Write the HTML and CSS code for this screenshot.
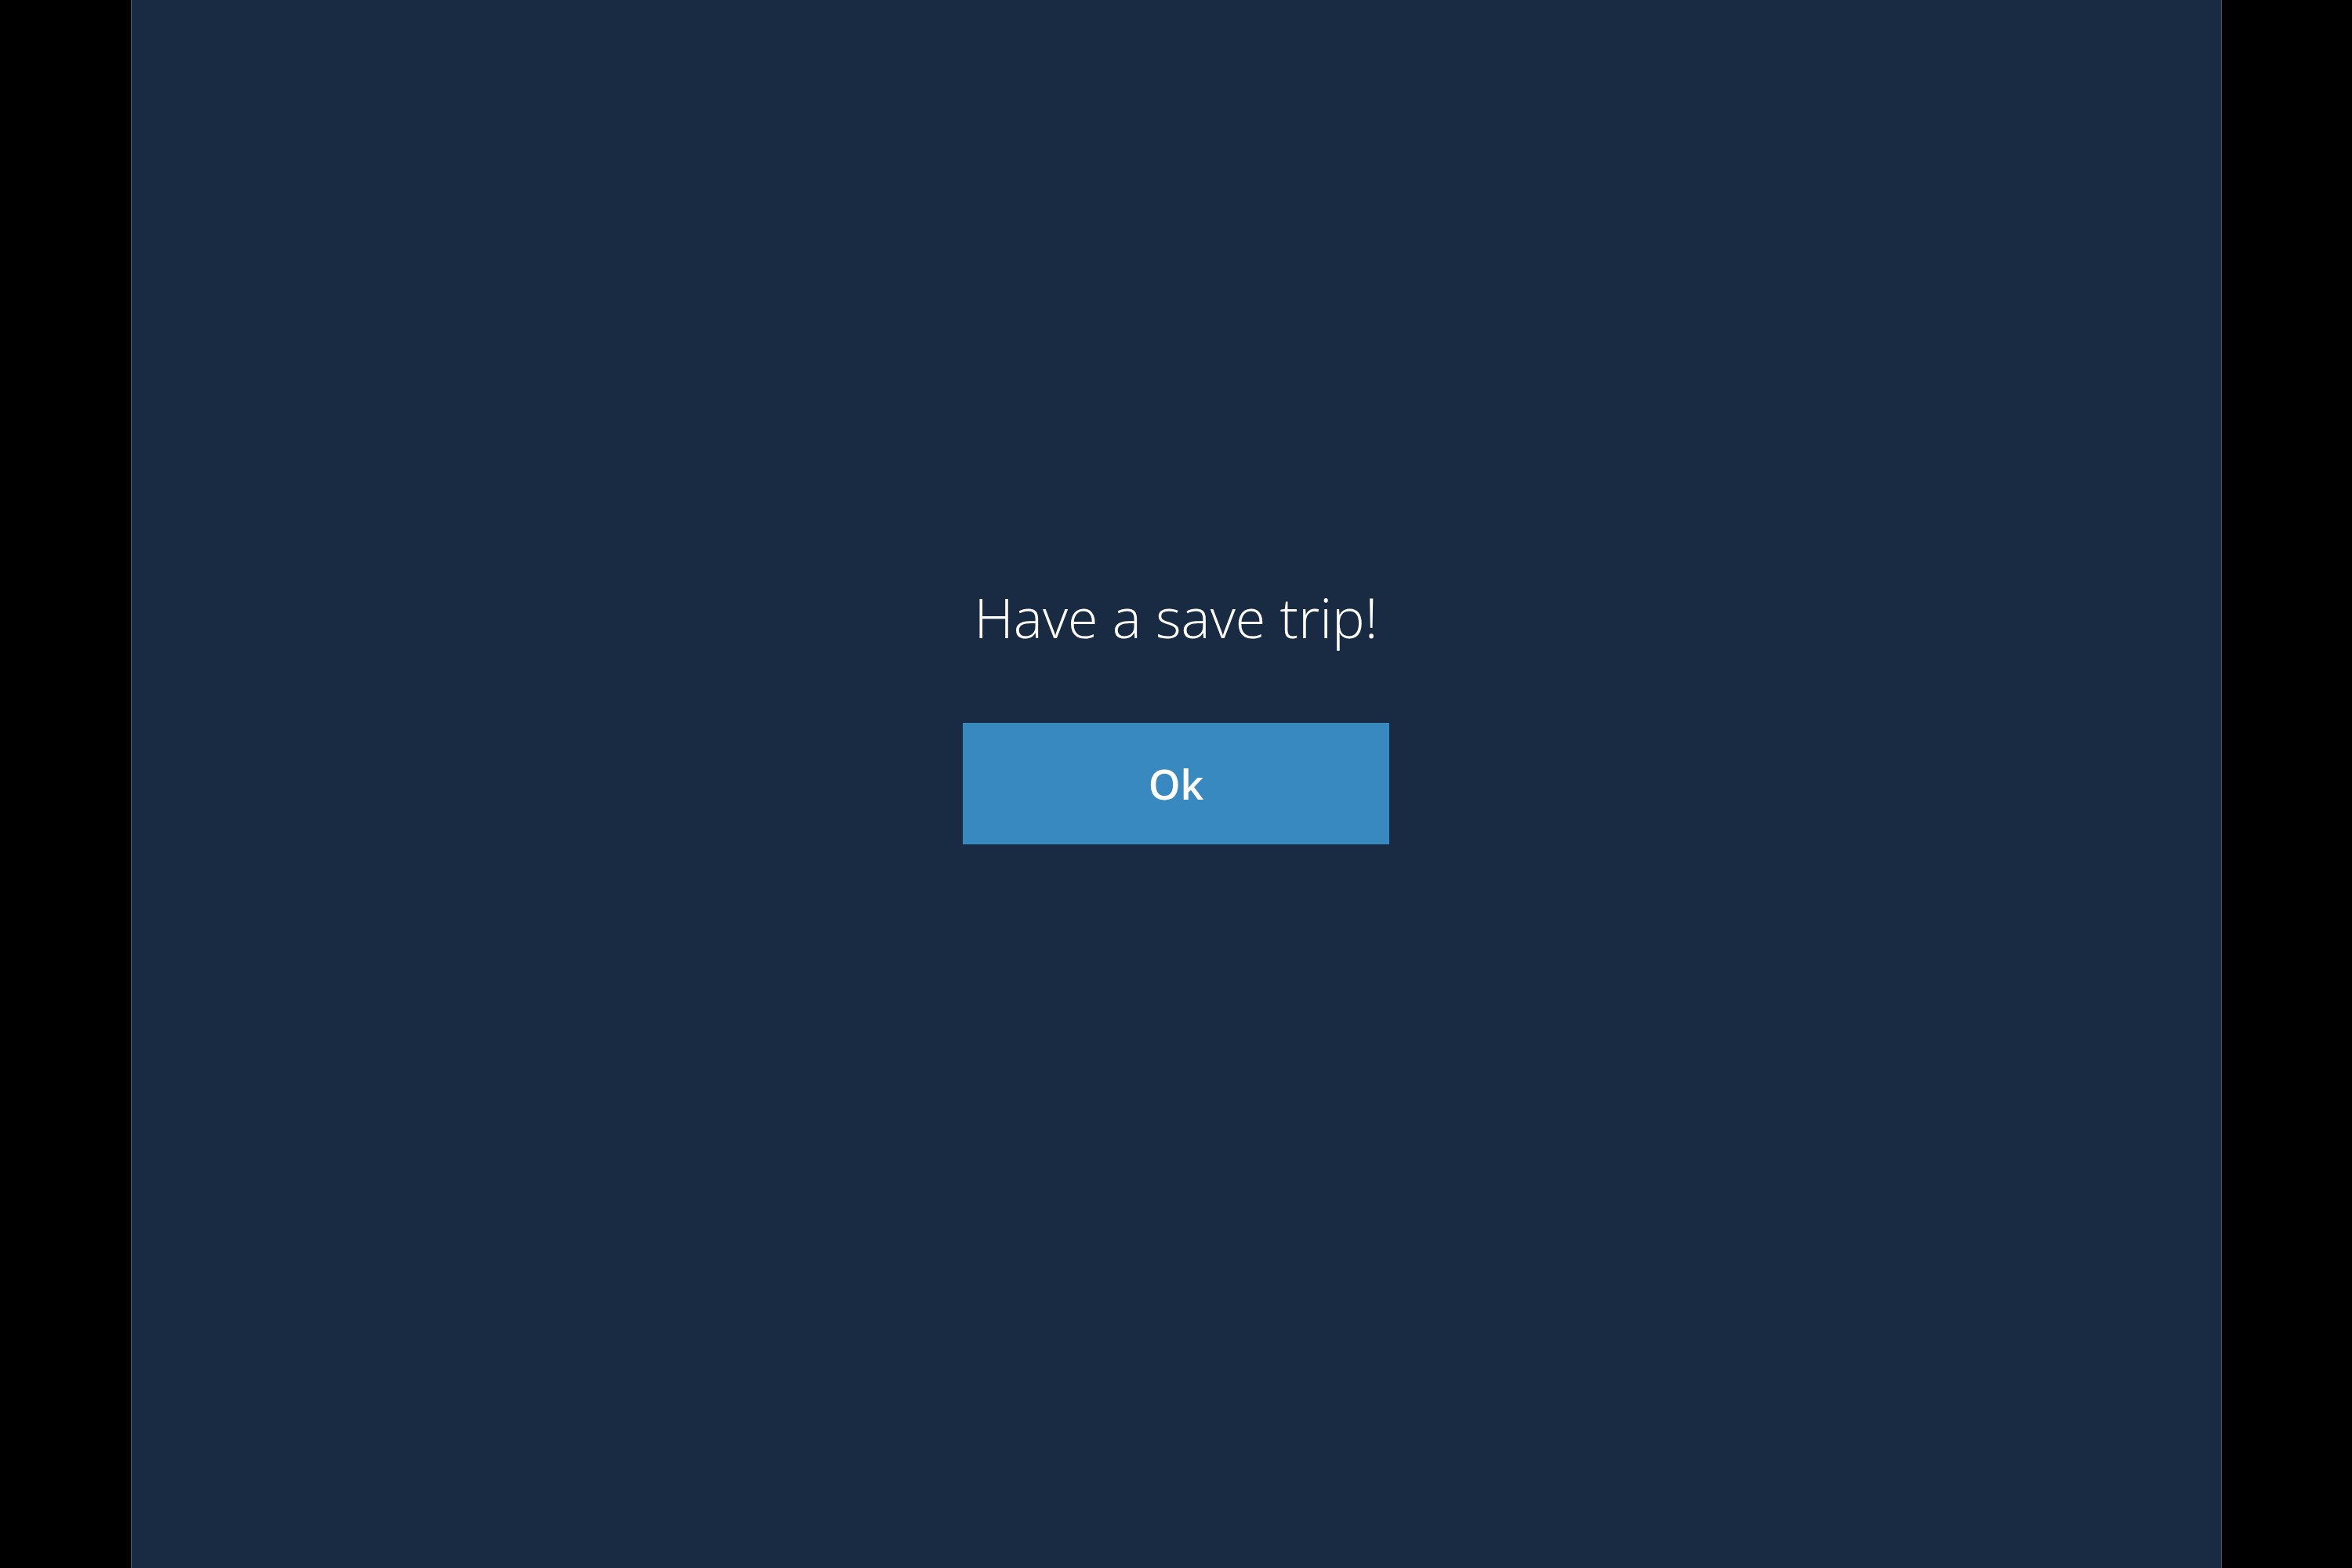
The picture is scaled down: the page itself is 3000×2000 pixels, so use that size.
FILE: index.html
```html
<!DOCTYPE html>
<html>
<head>
<meta charset="utf-8">
<link rel="stylesheet" href="styles.css">
</head>
<body>
<div class="screen">
  <div class="panel">
    <div class="message">Have a save trip!</div>
    <button class="ok">Ok</button>
  </div>
</div>
</body>
</html>
```
FILE: styles.css
```css
html, body {
  margin: 0;
  padding: 0;
  background: #000;
  height: 100%;
}
.screen {
  display: flex;
  justify-content: center;
  height: 2000px;
}
.panel {
  width: 2667px;
  height: 2000px;
  box-sizing: border-box;
  background: #182b42;
  border-left: 1px solid #4a5a6e;
  border-right: 1px solid #4a5a6e;
  display: flex;
  flex-direction: column;
  align-items: center;
  padding-top: 732px;
  font-family: "Open Sans", sans-serif;
}
.message {
  color: #fff;
  font-weight: 300;
  font-size: 70px;
  line-height: 110px;
}
.ok {
  margin-top: 80px;
  width: 544px;
  height: 155px;
  border: none;
  background: #3789c0;
  color: #fff;
  font-family: "Open Sans", sans-serif;
  font-weight: 600;
  font-size: 52px;
  padding: 0;
}
```
